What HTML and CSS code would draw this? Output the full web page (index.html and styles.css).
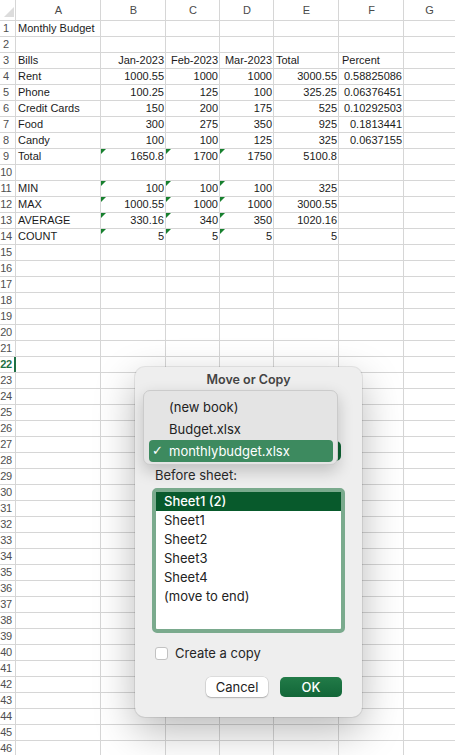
FILE: index.html
```html
<!DOCTYPE html>
<html>
<head>
<meta charset="utf-8">
<title>Monthly Budget</title>
<link rel="stylesheet" href="styles.css">
</head>
<body>
<div class="sheet">
  <div class="row hdr"><div class="corner"><span class="ctri"></span></div><div class="ch">A</div><div class="ch">B</div><div class="ch">C</div><div class="ch">D</div><div class="ch">E</div><div class="ch">F</div><div class="ch">G</div></div>
  <div class="row"><div class="rh"><span>1</span></div><div class="c">Monthly Budget</div></div>
  <div class="row"><div class="rh"><span>2</span></div></div>
  <div class="row"><div class="rh"><span>3</span></div><div class="c">Bills</div><div class="c n">Jan-2023</div><div class="c n">Feb-2023</div><div class="c n">Mar-2023</div><div class="c">Total</div><div class="c p">Percent</div></div>
  <div class="row"><div class="rh"><span>4</span></div><div class="c">Rent</div><div class="c n">1000.55</div><div class="c n">1000</div><div class="c n">1000</div><div class="c n">3000.55</div><div class="c n">0.58825086</div></div>
  <div class="row"><div class="rh"><span>5</span></div><div class="c">Phone</div><div class="c n">100.25</div><div class="c n">125</div><div class="c n">100</div><div class="c n">325.25</div><div class="c n">0.06376451</div></div>
  <div class="row"><div class="rh"><span>6</span></div><div class="c">Credit Cards</div><div class="c n">150</div><div class="c n">200</div><div class="c n">175</div><div class="c n">525</div><div class="c n">0.10292503</div></div>
  <div class="row"><div class="rh"><span>7</span></div><div class="c">Food</div><div class="c n">300</div><div class="c n">275</div><div class="c n">350</div><div class="c n">925</div><div class="c n">0.1813441</div></div>
  <div class="row"><div class="rh"><span>8</span></div><div class="c">Candy</div><div class="c n">100</div><div class="c n">100</div><div class="c n">125</div><div class="c n">325</div><div class="c n">0.0637155</div></div>
  <div class="row"><div class="rh"><span>9</span></div><div class="c">Total</div><div class="c n t">1650.8</div><div class="c n t">1700</div><div class="c n t">1750</div><div class="c n">5100.8</div></div>
  <div class="row"><div class="rh"><span>10</span></div></div>
  <div class="row"><div class="rh"><span>11</span></div><div class="c">MIN</div><div class="c n t">100</div><div class="c n t">100</div><div class="c n t">100</div><div class="c n">325</div></div>
  <div class="row"><div class="rh"><span>12</span></div><div class="c">MAX</div><div class="c n t">1000.55</div><div class="c n t">1000</div><div class="c n t">1000</div><div class="c n">3000.55</div></div>
  <div class="row"><div class="rh"><span>13</span></div><div class="c">AVERAGE</div><div class="c n t">330.16</div><div class="c n t">340</div><div class="c n t">350</div><div class="c n">1020.16</div></div>
  <div class="row"><div class="rh"><span>14</span></div><div class="c">COUNT</div><div class="c n t">5</div><div class="c n t">5</div><div class="c n t">5</div><div class="c n">5</div></div>
  <div class="row"><div class="rh"><span>15</span></div></div>
  <div class="row"><div class="rh"><span>16</span></div></div>
  <div class="row"><div class="rh"><span>17</span></div></div>
  <div class="row"><div class="rh"><span>18</span></div></div>
  <div class="row"><div class="rh"><span>19</span></div></div>
  <div class="row"><div class="rh"><span>20</span></div></div>
  <div class="row"><div class="rh"><span>21</span></div></div>
  <div class="row"><div class="rh sel"><span>22</span></div></div>
  <div class="row"><div class="rh"><span>23</span></div></div>
  <div class="row"><div class="rh"><span>24</span></div></div>
  <div class="row"><div class="rh"><span>25</span></div></div>
  <div class="row"><div class="rh"><span>26</span></div></div>
  <div class="row"><div class="rh"><span>27</span></div></div>
  <div class="row"><div class="rh"><span>28</span></div></div>
  <div class="row"><div class="rh"><span>29</span></div></div>
  <div class="row"><div class="rh"><span>30</span></div></div>
  <div class="row"><div class="rh"><span>31</span></div></div>
  <div class="row"><div class="rh"><span>32</span></div></div>
  <div class="row"><div class="rh"><span>33</span></div></div>
  <div class="row"><div class="rh"><span>34</span></div></div>
  <div class="row"><div class="rh"><span>35</span></div></div>
  <div class="row"><div class="rh"><span>36</span></div></div>
  <div class="row"><div class="rh"><span>37</span></div></div>
  <div class="row"><div class="rh"><span>38</span></div></div>
  <div class="row"><div class="rh"><span>39</span></div></div>
  <div class="row"><div class="rh"><span>40</span></div></div>
  <div class="row"><div class="rh"><span>41</span></div></div>
  <div class="row"><div class="rh"><span>42</span></div></div>
  <div class="row"><div class="rh"><span>43</span></div></div>
  <div class="row"><div class="rh"><span>44</span></div></div>
  <div class="row"><div class="rh"><span>45</span></div></div>
  <div class="row"><div class="rh"><span>46</span></div></div>
</div>

<div class="dlg">
  <div class="ttl">Move or Copy</div>
  <div class="pop"><span class="arr"></span></div>
  <div class="lbl">Before sheet:</div>
  <div class="list">
    <div class="it sel">Sheet1 (2)</div>
    <div class="it">Sheet1</div>
    <div class="it">Sheet2</div>
    <div class="it">Sheet3</div>
    <div class="it">Sheet4</div>
    <div class="it">(move to end)</div>
  </div>
  <div class="chk"><span class="box"></span><span>Create a copy</span></div>
  <div class="btns"><div class="btn cancel">Cancel</div><div class="btn ok">OK</div></div>

  <div class="menu">
    <div class="mi"><span class="ck"></span>(new book)</div>
    <div class="mi"><span class="ck"></span>Budget.xlsx</div>
    <div class="mi on"><span class="ck">✓</span>monthlybudget.xlsx</div>
  </div>
</div>
</body>
</html>
```
FILE: styles.css
```css
* { box-sizing: border-box; margin: 0; padding: 0; }
html, body { width: 455px; height: 755px; overflow: hidden; background: #fff; }
body { font-family: "Liberation Sans", Arial, sans-serif; position: relative; }

.sheet {
  width: 455px;
  height: 755px;
  overflow: hidden;
  font-size: 11px;
  color: #1b1b1b;
  background-image:
    linear-gradient(#d6d6d6, #d6d6d6), linear-gradient(#d6d6d6, #d6d6d6),
    linear-gradient(#d6d6d6, #d6d6d6), linear-gradient(#d6d6d6, #d6d6d6),
    linear-gradient(#d6d6d6, #d6d6d6), linear-gradient(#d6d6d6, #d6d6d6),
    linear-gradient(#d6d6d6, #d6d6d6);
  background-size: 1px 100%;
  background-repeat: no-repeat;
  background-position: 15px 0, 100px 0, 165px 0, 219px 0, 273px 0, 338px 0, 403px 0;
}

.row {
  display: grid;
  grid-template-columns: 16px 85px 65px 54px 54px 65px 65px 51px;
  height: 16px;
  line-height: 15px;
  border-bottom: 1px solid #d6d6d6;
}
.row.hdr { height: 21px; line-height: 20px; }

.corner { display: flex; align-items: flex-end; justify-content: flex-end; padding: 0 2px 3px 0; }
.ctri { width: 0; height: 0; border-left: 10px solid transparent; border-bottom: 10px solid #dcdcdc; }
.ch { text-align: center; color: #4a4a4a; }

.rh { color: #4f4f4f; }
.rh span { display: block; width: 12px; text-align: center; letter-spacing: -0.3px; }
.rh.sel { box-shadow: inset -2px 0 #1d7044; color: #1d7044; font-weight: bold; }

.c { position: relative; padding: 0 2px; white-space: nowrap; }
.c.n { text-align: right; padding-right: 2px; }
.c.p { padding-left: 3px; }
.c.t::before {
  content: "";
  position: absolute;
  left: 0;
  top: 0;
  border-top: 5px solid #17802e;
  border-right: 5px solid transparent;
}

/* dialog */
.dlg {
  position: absolute;
  left: 135px;
  top: 367px;
  width: 227px;
  height: 350px;
  padding: 0 17px 20px 17px;
  display: flex;
  flex-direction: column;
  background: #eeeeee;
  border-radius: 10px;
  box-shadow: 0 0 0 1px rgba(0,0,0,0.08), 0 14px 40px rgba(0,0,0,0.28);
  font-family: Inter, "Liberation Sans", sans-serif;
  font-size: 13px;
  color: #262626;
}
.ttl { height: 26px; line-height: 26px; text-align: center; font-size: 12.5px; font-weight: 600; color: #444; }
.pop {
  margin-top: 48px;
  height: 20px;
  margin-right: 4px;
  display: flex;
  justify-content: flex-end;
  background: #fff;
  border-radius: 5px;
}
.arr { width: 16px; height: 20px; background: #0f6233; border-radius: 0 5px 5px 0; }
.lbl { margin-top: 6px; line-height: 16px; padding-left: 3px; color: #2a2a2a; }
.list {
  margin-top: 5px;
  height: 145px;
  border: 4px solid #7aaa8d;
  border-radius: 5px;
  background: #fff;
}
.it { height: 19px; line-height: 19px; padding-left: 8px; color: #222; }
.it.sel { background: #085a2c; color: #fff; font-weight: 500; }
.chk { margin-top: 14px; height: 13px; display: flex; align-items: center; gap: 7px; padding-left: 3px; line-height: 13px; }
.box { width: 13px; height: 13px; border: 1px solid #c2c2c2; border-radius: 3px; background: #fff; }
.btns { margin-top: 17px; display: flex; justify-content: flex-end; gap: 12px; padding-right: 3px; }
.btn { width: 62px; height: 20px; line-height: 20px; border-radius: 5px; text-align: center; }
.cancel { background: #fff; color: #222; box-shadow: 0 0 0 0.5px rgba(0,0,0,0.14), 0 1px 1.5px rgba(0,0,0,0.2); }
.ok { background: linear-gradient(#227b48, #126638); color: #fff; font-weight: 500; }

.menu {
  position: absolute;
  left: 8px;
  top: 23px;
  width: 195px;
  height: 75px;
  padding: 5px 4px 2px 5px;
  background: #e4e4e4;
  border: 1px solid #cbcbcb;
  border-radius: 7px;
  box-shadow: 0 6px 16px rgba(0,0,0,0.2);
}
.mi { height: 22px; line-height: 22px; display: flex; padding-left: 3px; border-radius: 4px; color: #222; }
.mi .ck { width: 17px; font-family: "DejaVu Sans", sans-serif; font-size: 13px; font-weight: bold; }
.mi.on { background: #3d8a5f; color: #fff; }
```
